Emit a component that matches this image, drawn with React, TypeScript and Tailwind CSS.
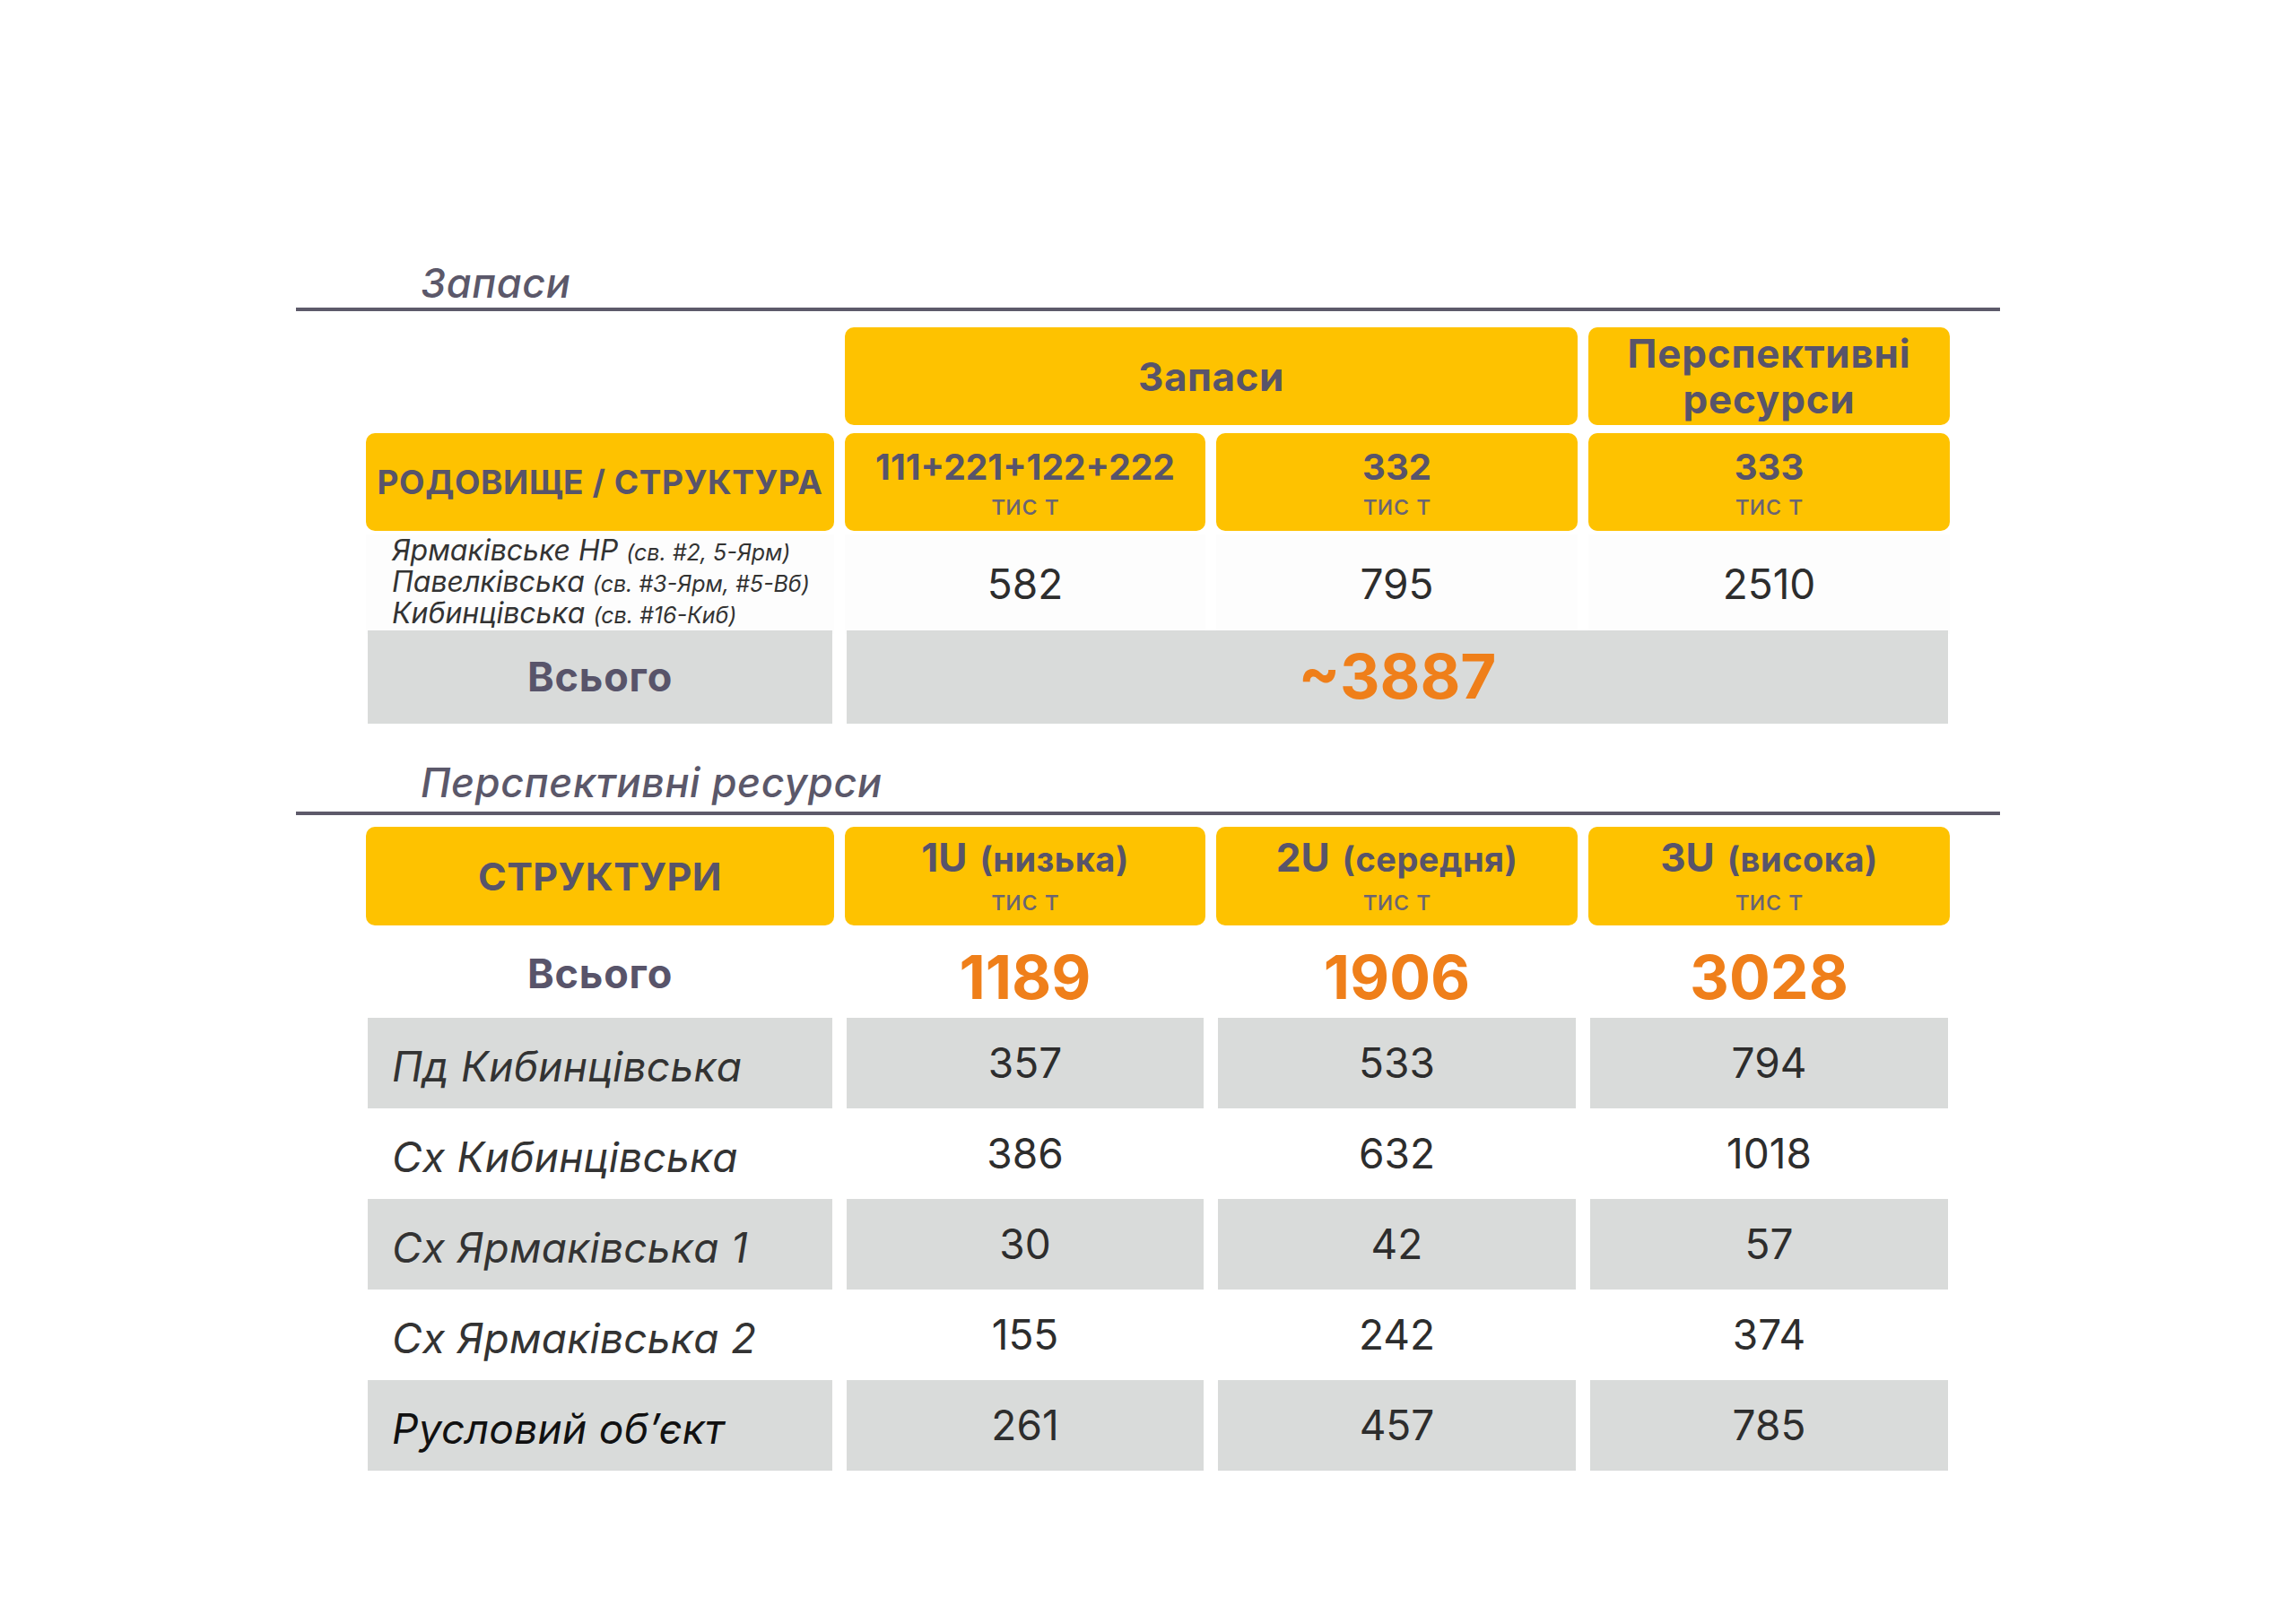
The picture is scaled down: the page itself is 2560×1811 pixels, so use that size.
const font = { fontFamily: 'Inter, "Noto Sans", sans-serif' };

const cols = 'grid grid-cols-[522px_402px_403px_403px] gap-x-[12px]';

const resources = [
  { name: 'Пд Кибинцівська', values: ['357', '533', '794'], gray: true },
  { name: 'Сх Кибинцівська', values: ['386', '632', '1018'], gray: false },
  { name: 'Сх Ярмаківська 1', values: ['30', '42', '57'], gray: true },
  { name: 'Сх Ярмаківська 2', values: ['155', '242', '374'], gray: false },
  { name: 'Русловий об’єкт', values: ['261', '457', '785'], gray: true, dark: true },
];

function SectionTitle({ text, top }: { text: string; top: string }) {
  return (
    <div className={top}>
      <div className="pl-[469px] h-[42px] text-[45px] leading-[42px] italic font-medium tracking-[0.6px] text-[#5b586a]">
        {text}
      </div>
    </div>
  );
}

function HeadCell({ title, unit, gap = 'mt-[6px]' }: { title: React.ReactNode; unit?: boolean; gap?: string }) {
  return (
    <div className="rounded-[10px] bg-[#fec200] flex flex-col items-center justify-center text-[#58546a]">
      {title}
      {unit && <div className={`text-[31px] leading-[32px] font-normal text-[#6a6474] ${gap}`}>тис т</div>}
    </div>
  );
}

export default function App() {
  return (
    <div className="w-[2560px] h-[1811px] bg-white overflow-hidden pt-[295px]" style={font}>
      {/* Запаси */}
      <SectionTitle text="Запаси" top="" />
      <div className="ml-[330px] mt-[6px] w-[1900px] h-[4px] bg-[#5d5a6a]" />

      <div className="ml-[408px] mt-[18px] w-[1767px]">
        <div className={`${cols} h-[109px]`}>
          <div />
          <div className="col-span-2 rounded-[10px] bg-[#fec200] flex items-center justify-center text-[44px] font-bold tracking-[0.5px] text-[#58546a]">
            Запаси
          </div>
          <div className="rounded-[10px] bg-[#fec200] flex items-center justify-center text-center text-[44px] leading-[51px] font-bold tracking-[0.8px] text-[#58546a]">
            Перспективні
            <br />
            ресурси
          </div>
        </div>

        <div className={`${cols} h-[109px] mt-[9px]`}>
          <div className="rounded-[10px] bg-[#fec200] flex items-center justify-center text-[37px] font-bold text-[#58546a] tracking-[0.6px]">
            РОДОВИЩЕ / СТРУКТУРА
          </div>
          <HeadCell unit title={<div className="text-[39px] leading-[40px] font-bold mt-[4px]">111+221+122+222</div>} />
          <HeadCell unit title={<div className="text-[40px] leading-[40px] font-bold mt-[4px]">332</div>} />
          <HeadCell unit title={<div className="text-[40px] leading-[40px] font-bold mt-[4px]">333</div>} />
        </div>

        <div className={`${cols} h-[104px] mt-[4px]`}>
          <div className="flex flex-col justify-center pl-[29px] pb-[6px] italic text-[#333333] bg-[#fdfdfd]">
            <div className="h-[35px] text-[32px] leading-[35px] whitespace-nowrap">
              Ярмаківське НР <span className="text-[25px] leading-none">(св. #2, 5-Ярм)</span>
            </div>
            <div className="h-[35px] text-[32px] leading-[35px] whitespace-nowrap">
              Павелківська <span className="text-[25px] leading-none">(св. #3-Ярм, #5-Вб)</span>
            </div>
            <div className="h-[35px] text-[32px] leading-[35px] whitespace-nowrap">
              Кибинцівська <span className="text-[25px] leading-none">(св. #16-Киб)</span>
            </div>
          </div>
          {['582', '795', '2510'].map((v) => (
            <div key={v} className="flex items-center justify-center text-[46px] text-[#2d2d2d] bg-[#fdfdfd]">
              {v}
            </div>
          ))}
        </div>

        <div className={`${cols} h-[101px] mt-[3px]`}>
          <div className="mx-[2px] bg-[#d9dbda] flex items-center justify-center text-[45px] font-bold tracking-[0.8px] text-[#58546a]">
            Всього
          </div>
          <div className="col-span-3 mx-[2px] bg-[#d9dbda] flex items-center justify-center text-[69px] font-bold text-[#ef7f1a]">
            ~3887
          </div>
        </div>
      </div>

      {/* Перспективні ресурси */}
      <SectionTitle text="Перспективні ресурси" top="mt-[48px]" />
      <div className="ml-[330px] mt-[11px] w-[1900px] h-[4px] bg-[#5d5a6a]" />

      <div className="ml-[408px] mt-[13px] w-[1767px]">
        <div className={`${cols} h-[110px]`}>
          <div className="rounded-[10px] bg-[#fec200] flex items-center justify-center text-[43px] font-bold tracking-[0.4px] text-[#58546a]">
            СТРУКТУРИ
          </div>
          {[
            ['1U', '(низька)'],
            ['2U', '(середня)'],
            ['3U', '(висока)'],
          ].map(([u, l]) => (
            <HeadCell
              key={u}
              unit
              gap="mt-[2px]"
              title={
                <div className="font-bold leading-[40px] mt-[2px] whitespace-nowrap">
                  <span className="text-[44px]">{u}</span>
                  <span className="text-[38px] tracking-[0.5px] ml-[14px]">{l}</span>
                </div>
              }
            />
          ))}
        </div>

        <div className={`${cols} h-[103px]`}>
          <div className="flex items-center justify-center text-[45px] font-bold tracking-[0.8px] text-[#58546a]">Всього</div>
          {['1189', '1906', '3028'].map((v) => (
            <div key={v} className="flex items-center justify-center pt-[6px] text-[68px] font-bold text-[#ef7f1a]">
              {v}
            </div>
          ))}
        </div>

        {resources.map((r) => (
          <div key={r.name} className={`${cols} h-[101px]`}>
            <div
              className={`mx-[2px] flex items-center pl-[27px] pt-[8px] text-[46px] italic tracking-[0.3px] ${
                r.dark ? 'text-[#111111]' : 'text-[#333333]'
              } ${r.gray ? 'bg-[#d9dbda]' : ''}`}
            >
              {r.name}
            </div>
            {r.values.map((v, i) => (
              <div
                key={i}
                className={`mx-[2px] flex items-center justify-center text-[46px] text-[#2d2d2d] ${
                  r.gray ? 'bg-[#d9dbda]' : ''
                }`}
              >
                {v}
              </div>
            ))}
          </div>
        ))}
      </div>
    </div>
  );
}
